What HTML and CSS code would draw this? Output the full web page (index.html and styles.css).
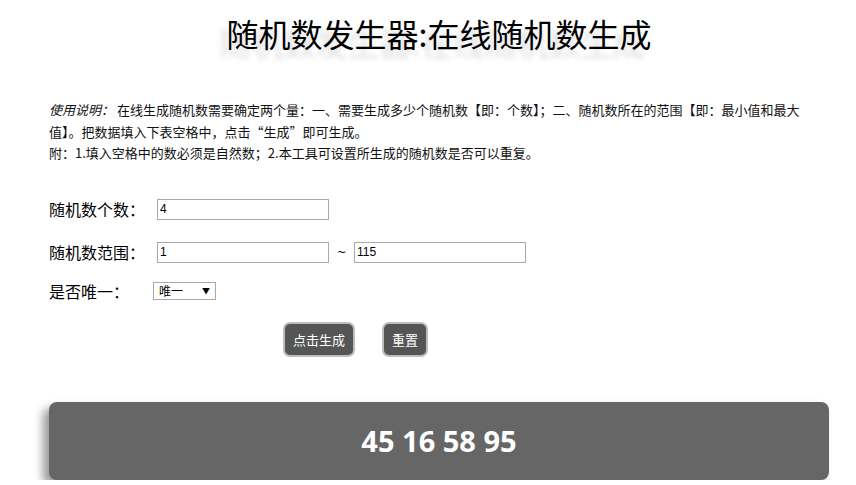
FILE: index.html
```html
<!DOCTYPE html>
<html lang="zh-CN">
<head>
<meta charset="utf-8">
<title>随机数发生器:在线随机数生成</title>
<link rel="stylesheet" href="styles.css">
</head>
<body>
<div class="page">
  <h1 class="title">随机数发生器:在线随机数生成</h1>
  <div class="desc">
    <p><em class="lead">使用说明：</em>在线生成随机数需要确定两个量：一、需要生成多少个随机数【即：个数】；二、随机数所在的范围【即：最小值和最大值】。把数据填入下表空格中，点击“生成”即可生成。</p>
    <p>附：1.填入空格中的数必须是自然数；2.本工具可设置所生成的随机数是否可以重复。</p>
  </div>
  <form class="form">
    <div class="row">
      <label class="label">随机数个数：</label>
      <input class="field" type="text" value="4">
    </div>
    <div class="row">
      <label class="label">随机数范围：</label>
      <input class="field" type="text" value="1">
      <span class="tilde">~</span>
      <input class="field" type="text" value="115">
    </div>
    <div class="row row-last">
      <label class="label label-short">是否唯一：</label>
      <span class="select-wrap">
        <select class="select">
          <option>唯一</option>
          <option>不唯一</option>
        </select>
      </span>
    </div>
  </form>
  <div class="actions">
    <button class="btn" type="button">点击生成</button>
    <button class="btn" type="button">重置</button>
  </div>
  <div class="result">45 16 58 95</div>
</div>
</body>
</html>
```
FILE: styles.css
```css
html, body {
  margin: 0;
  padding: 0;
  background: #fff;
}
body {
  font-family: "Noto Sans CJK SC", "Noto Sans", sans-serif;
  color: #000;
}
.page {
  width: 780px;
  margin-left: 49px;
}
.title {
  margin: 0;
  padding-top: 14px;
  font-size: 32px;
  line-height: 38px;
  font-weight: normal;
  text-align: center;
  color: #000;
  text-shadow: -7px 9px 5px #dedede;
}
.desc {
  margin-top: 47px;
  width: 764px;
  font-size: 13px;
  line-height: 21.5px;
  color: #111;
}
.desc p {
  margin: 0;
}
.lead {
  font-style: italic;
  margin-right: 3px;
}
.form {
  margin-top: 35px;
}
.row {
  display: flex;
  align-items: center;
  height: 21px;
  margin-bottom: 22px;
}
.row-last {
  margin-bottom: 0;
  height: 19px;
  margin-top: -3px;
}
.label {
  width: 108px;
  font-size: 16px;
  line-height: 21px;
}
.label-short {
  width: 104px;
}
.field {
  box-sizing: border-box;
  width: 172px;
  height: 21px;
  margin: 0;
  padding: 0 2px;
  border: 1px solid #a9a9a9;
  font-family: "Liberation Sans", Arial, sans-serif;
  font-size: 12px;
  color: #000;
  background: #fff;
  outline: none;
}
.tilde {
  width: 25px;
  text-align: center;
  font-family: "Liberation Sans", Arial, sans-serif;
  font-size: 14px;
}
.select-wrap {
  position: relative;
  display: flex;
  height: 18px;
}
.select-wrap::after {
  content: "▼";
  position: absolute;
  right: 6px;
  top: 4px;
  font-size: 8px;
  line-height: 10px;
  color: #000;
  pointer-events: none;
}
.select {
  -webkit-appearance: none;
  appearance: none;
  box-sizing: border-box;
  width: 63px;
  height: 18px;
  margin: 0;
  padding: 0 0 0 5px;
  border: 1px solid #a9a9a9;
  border-radius: 0;
  background: #fff;
  font-family: "Noto Sans CJK SC", sans-serif;
  font-size: 12px;
  line-height: 16px;
  color: #000;
}
.actions {
  display: flex;
  gap: 27px;
  padding-left: 234px;
  margin-top: 21px;
}
.btn {
  box-sizing: border-box;
  height: 35px;
  padding: 0 8px;
  border: 2px solid #bdbdbd;
  border-radius: 7px;
  background: #555;
  color: #fff;
  font-family: "Noto Sans CJK SC", sans-serif;
  font-size: 13px;
  cursor: pointer;
}
.result {
  margin-top: 45px;
  height: 78px;
  border-radius: 8px;
  background: #666;
  box-shadow: -6px 6px 10px #999;
  color: #fff;
  text-align: center;
  font-family: "Open Sans", sans-serif;
  font-weight: bold;
  font-size: 29px;
  line-height: 78px;
}
```
